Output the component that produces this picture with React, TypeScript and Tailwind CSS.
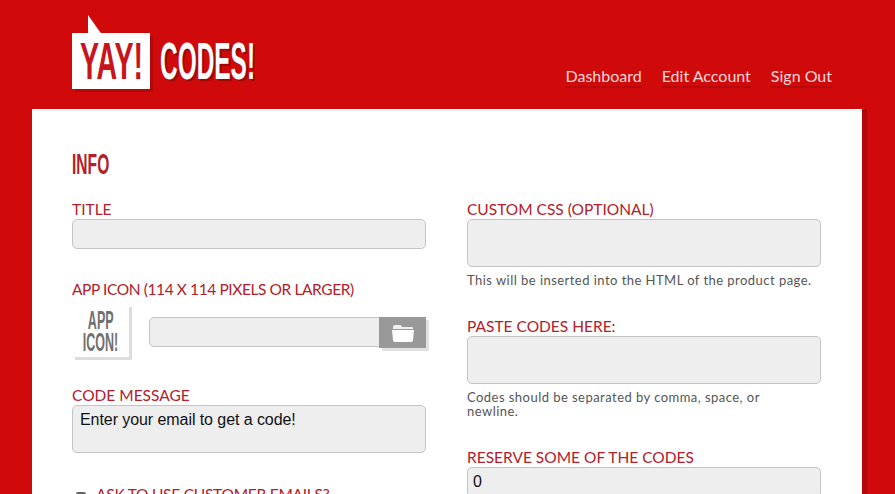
const cond = { fontFamily: '"Liberation Sans", Arial, sans-serif' };

function Label({ className = "", children }: { className?: string; children: React.ReactNode }) {
  return <div className={`h-[18px] text-[15.5px] leading-[18px] text-[#b2202a] whitespace-nowrap ${className}`}>{children}</div>;
}

function Field({ h, className = "px-[7px]", children }: { h: string; className?: string; children?: React.ReactNode }) {
  return (
    <div className={`${h} ${className} mt-[1px] w-[354px] rounded-[5px] border border-[#c4c4c4] bg-[#eeeeee] text-[16px] leading-[28px] tracking-[-0.07px] text-[#111] font-['Liberation_Sans',sans-serif]`}>
      {children}
    </div>
  );
}

function Help({ children }: { children: React.ReactNode }) {
  return <p className="mt-[6px] whitespace-nowrap text-[13px] leading-[14px] tracking-[0.46px] text-[#555]">{children}</p>;
}

function Nav({ children }: { children: React.ReactNode }) {
  return <a className="border-b-2 border-[#b80a0a] text-[16px] leading-[20px] text-[#fbd9d9]">{children}</a>;
}

function Cond({ className, children }: { className: string; children: React.ReactNode }) {
  return (
    <span style={cond} className={`inline-block font-bold whitespace-nowrap ${className}`}>
      {children}
    </span>
  );
}

export default function App() {
  return (
    <div className="h-[494px] w-[895px] overflow-hidden bg-[#d00a0a] font-['Lato',sans-serif]">
      <header className="flex h-[109px] items-start justify-between pl-[72px] pr-[63px]">
        <div className="relative mt-[33px] flex items-start">
          <svg className="absolute left-[14px] top-[-18px]" width="22" height="19" viewBox="0 0 22 19">
            <path d="M2 0 L14 17 L16 19 L2 19 Z" fill="#fff" />
          </svg>
          <div className="flex h-[56px] w-[78px] items-center overflow-hidden bg-white pl-[8px] shadow-[3px_3px_0_#b30808]">
            <Cond className="origin-left scale-x-[0.55] text-[52px] leading-[46px] text-[#c8141c]">YAY!</Cond>
          </div>
          <div className="ml-[10px] flex h-[56px] items-center">
            <Cond className="origin-left scale-x-[0.47] text-[52px] leading-[46px] text-white [text-shadow:4px_2px_0_#9c0808]">CODES!</Cond>
          </div>
        </div>
        <nav className="mt-[66px] flex gap-[20px]">
          <Nav>Dashboard</Nav>
          <Nav>Edit Account</Nav>
          <Nav>Sign Out</Nav>
        </nav>
      </header>

      <main className="ml-[32px] h-[385px] w-[830px] bg-white px-[40px] pt-[38px] shadow-[5px_0_0_#b30808]">
        <h1 className="h-[34px] leading-[34px]">
          <Cond className="origin-left scale-x-[0.52] text-[30px] text-[#b2202a]">INFO</Cond>
        </h1>
        <div className="mt-[19px] flex gap-[41px]">
          <div className="w-[354px]">
            <Label>TITLE</Label>
            <Field h="h-[30px]" />
            <div className="mt-[31px]">
              <Label className="tracking-[-0.4px]">APP ICON (114 X 114 PIXELS OR LARGER)</Label>
            </div>
            <div className="mt-[6px] flex items-start">
              <div className="flex h-[53px] w-[57px] flex-col items-center justify-center bg-white shadow-[3px_3px_0_#dddddd]">
                <Cond className="scale-x-[0.5] text-[25px] leading-[22px] text-[#707070]">APP</Cond>
                <Cond className="scale-x-[0.5] text-[25px] leading-[22px] text-[#707070]">ICON!</Cond>
              </div>
              <div className="relative ml-[20px] mt-[13px] h-[30px] w-[277px] rounded-l-[5px] border border-[#c4c4c4] bg-[#eeeeee]">
                <div className="absolute right-[-1px] top-[-1px] flex h-[31px] w-[47px] items-center justify-center bg-[#999999] shadow-[3px_3px_0_#e2e2e2]">
                  <svg width="22" height="20" viewBox="0 0 22 20">
                    <path d="M1 4 Q1 2 3 2 H8 Q9 2 9.5 3 L10 4 H20 Q21 4 21 5 V6 H1 Z" fill="#fff" opacity="0.85" />
                    <path d="M0 7 H22 L21 17 Q21 19 19 19 H3 Q1 19 1 17 Z" fill="#fff" />
                  </svg>
                </div>
              </div>
            </div>
            <div className="mt-[29px]">
              <Label>CODE MESSAGE</Label>
            </div>
            <Field h="h-[48px]">Enter your email to get a code!</Field>
            <div className="mt-[32px] flex items-start">
              <span className="ml-[4px] mt-[7px] h-[10px] w-[10px] rounded-[2px] bg-[#666]" />
              <span className="ml-[10px]">
                <Label className="tracking-[-0.25px]">ASK TO USE CUSTOMER EMAILS?</Label>
              </span>
            </div>
          </div>
          <div className="w-[354px]">
            <Label>CUSTOM CSS (OPTIONAL)</Label>
            <Field h="h-[48px]" />
            <Help>This will be inserted into the HTML of the product page.</Help>
            <div className="mt-[30px]">
              <Label>PASTE CODES HERE:</Label>
            </div>
            <Field h="h-[48px]" />
            <Help>
              Codes should be separated by comma, space, or
              <br />
              newline.
            </Help>
            <div className="mt-[30px]">
              <Label>RESERVE SOME OF THE CODES</Label>
            </div>
            <Field h="h-[30px]" className="px-[5px]">0</Field>
          </div>
        </div>
      </main>
    </div>
  );
}
